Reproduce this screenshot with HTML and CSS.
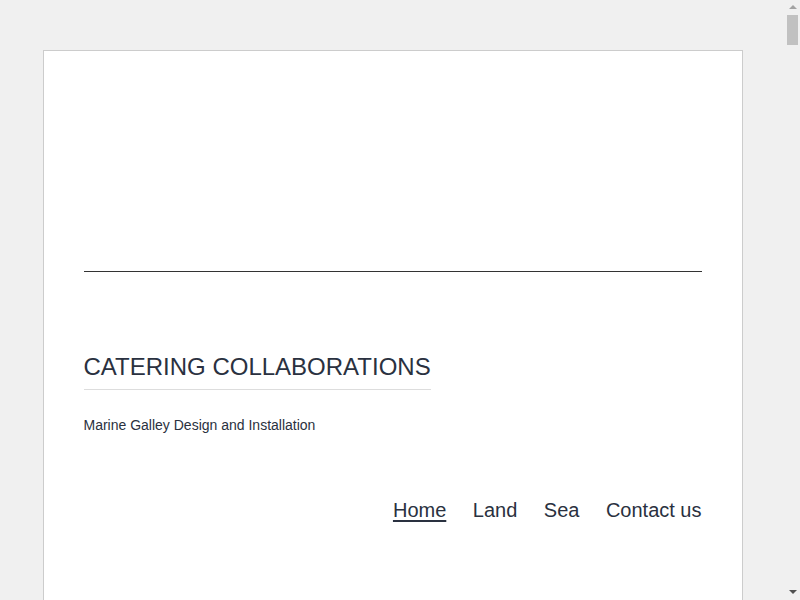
FILE: index.html
```html
<!DOCTYPE html>
<html>
<head>
<meta charset="utf-8">
<link rel="stylesheet" href="styles.css">
</head>
<body>
<div class="page">
  <header class="site-header">
    <div class="header-media"></div>
    <hr class="rule">
    <div class="branding">
      <h1 class="site-title">CATERING COLLABORATIONS</h1>
      <p class="tagline">Marine Galley Design and Installation</p>
    </div>
    <nav class="main-nav">
      <a class="nav-link current" href="#">Home</a>
      <a class="nav-link" href="#">Land</a>
      <a class="nav-link" href="#">Sea</a>
      <a class="nav-link" href="#">Contact us</a>
    </nav>
  </header>
  <main class="content"></main>
</div>
<div class="scrollbar" aria-hidden="true">
  <span class="sb-arrow sb-up"></span>
  <span class="sb-thumb"></span>
  <span class="sb-arrow sb-down"></span>
</div>
</body>
</html>
```

FILE: styles.css
```css
html, body {
  margin: 0;
  padding: 0;
}
html {
  overflow: hidden;
}
body {
  background: #f0f0f0;
  font-family: "Liberation Sans", Arial, sans-serif;
  color: #2a3140;
  margin-right: 15px;
}
.page {
  box-sizing: border-box;
  width: 700px;
  margin: 50px auto 0;
  background: #fff;
  border: 1px solid #cccccc;
  padding: 0 40px;
  min-height: 2400px;
}
.header-media {
  height: 220px;
}
.rule {
  margin: 0;
  border: 0;
  border-top: 1px solid #333;
  height: 0;
}
.branding {
  padding-top: 79px;
}
.site-title {
  display: inline-block;
  margin: 0;
  font-size: 24px;
  font-weight: normal;
  line-height: 32px;
  padding-bottom: 6px;
  border-bottom: 1px solid #dddddd;
}
.tagline {
  margin: 25px 0 0;
  font-size: 14px;
  line-height: 20px;
}
.main-nav {
  display: flex;
  justify-content: flex-end;
  gap: 26.5px;
  margin-top: 63px;
}
.nav-link {
  color: #2a3140;
  text-decoration: none;
  font-size: 20px;
  line-height: 24px;
}
.nav-link.current {
  text-decoration: underline;
  text-decoration-thickness: 2px;
  text-underline-offset: 3px;
}
.content {
  height: 100px;
}
.scrollbar {
  position: fixed;
  top: 0;
  right: 0;
  width: 15px;
  height: 100%;
  background: #f0f0f0;
}
.sb-thumb {
  position: absolute;
  left: 2px;
  top: 15px;
  width: 11px;
  height: 30px;
  background: #c1c1c1;
}
.sb-arrow {
  position: absolute;
  left: 4px;
  width: 0;
  height: 0;
  border-left: 4px solid transparent;
  border-right: 4px solid transparent;
}
.sb-up {
  top: 5px;
  border-bottom: 4px solid #a3a3a3;
}
.sb-down {
  bottom: 6px;
  border-top: 4px solid #505050;
}
```
